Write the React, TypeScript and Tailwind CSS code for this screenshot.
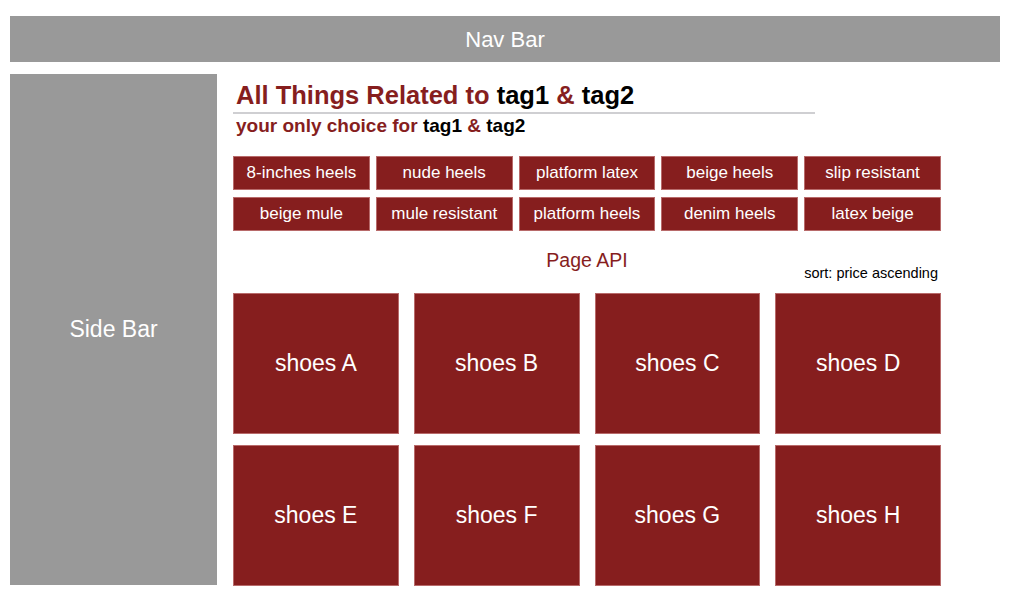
const TAGS = [
  '8-inches heels',
  'nude heels',
  'platform latex',
  'beige heels',
  'slip resistant',
  'beige mule',
  'mule resistant',
  'platform heels',
  'denim heels',
  'latex beige',
];

const SHOES = ['A', 'B', 'C', 'D', 'E', 'F', 'G', 'H'];

export default function App() {
  return (
    <div className="h-[602px] w-[1010px] bg-white font-['Liberation_Sans',Arial,sans-serif]">
      <div className="mx-[10px] flex h-[46px] translate-y-[16px] items-center justify-center bg-[#999999] text-[22px] text-white">
        Nav Bar
      </div>

      <div className="mt-[28px] flex px-[10px]">
        <div className="flex h-[511px] w-[207px] items-center justify-center bg-[#999999] text-[23px] text-white">
          Side Bar
        </div>

        <div className="w-[724px] pl-[16px]">
          <div className="mt-[6px] w-[582px] border-b-2 border-[#cfcfd2] pl-[3px] pb-[2px]">
            <h1 className="text-[25.5px] font-bold leading-[30px] text-[#861e1e]">
              All Things Related to <span className="text-black">tag1</span> &amp;{' '}
              <span className="text-black">tag2</span>
            </h1>
          </div>
          <p className="mt-[1px] pl-[3px] text-[19px] font-bold leading-[22px] text-[#861e1e]">
            your only choice for <span className="text-black">tag1</span> &amp;{' '}
            <span className="text-black">tag2</span>
          </p>

          <div className="mt-[19px] grid w-[708px] grid-cols-5 gap-x-[6px] gap-y-[7px]">
            {TAGS.map(tag => (
              <div
                key={tag}
                className="flex h-[34px] items-center justify-center border border-[#b86a6a] bg-[#861e1e] text-[17px] text-white"
              >
                {tag}
              </div>
            ))}
          </div>

          <div className="relative mt-[17px] h-[40px] w-[708px]">
            <div className="text-center text-[19.5px] leading-[24px] text-[#861e1e]">Page API</div>
            <div className="absolute right-[3px] top-[17px] text-[14.5px] leading-[16px] text-black">
              sort: price ascending
            </div>
          </div>

          <div className="mt-[5px] grid w-[708px] grid-cols-4 gap-x-[15px] gap-y-[11px]">
            {SHOES.map(s => (
              <div
                key={s}
                className="flex h-[141px] items-center justify-center border border-[#b86a6a] bg-[#861e1e] text-[23px] text-white"
              >
                shoes {s}
              </div>
            ))}
          </div>
        </div>
      </div>
    </div>
  );
}
